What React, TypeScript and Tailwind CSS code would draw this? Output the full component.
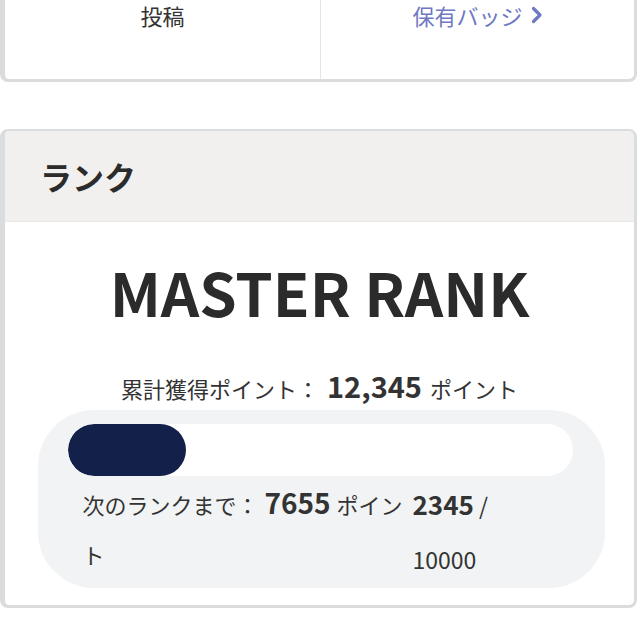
import React from 'react';

const font = { fontFamily: '"Noto Sans CJK JP", "Noto Sans", sans-serif' };

function StatsCard() {
  return (
    <div className="w-[637px] h-[82px] bg-white border-l-[5px] border-r-[3px] border-b-[3px] border-[#dadcde] rounded-b-[8px] flex items-start">
      <div className="w-[316px] h-full border-r border-[#e4e4e4] flex justify-center">
        <span className="text-[22px] leading-[30px] text-[#333333]">投稿</span>
      </div>
      <div className="flex-1 flex justify-center">
        <a className="text-[22px] leading-[30px] text-[#6f78c2] flex items-center gap-[8px]">
          保有バッジ
          <svg width="12" height="18" viewBox="0 0 12 18" fill="none">
            <path d="M2.5 2.5 L9 9 L2.5 15.5" stroke="#6f78c2" strokeWidth="3.2" strokeLinecap="round" strokeLinejoin="round" />
          </svg>
        </a>
      </div>
    </div>
  );
}

function RankCard() {
  const current = 2345;
  const goal = 10000;
  const pct = (current / goal) * 100;

  return (
    <div className="w-[637px] bg-white border-l-[5px] border-r-[3px] border-t-[2px] border-b-[3px] border-[#dadcde] rounded-[8px] overflow-hidden">
      <div className="h-[91px] bg-[#f1f0ef] border-b border-[#e8e8e8] flex items-center pl-[35px]">
        <h2 className="text-[32px] font-bold text-[#2b2b2b] leading-none">ランク</h2>
      </div>
      <div className="pt-[33px] pb-[17px] flex flex-col items-center">
        <p className="text-[60px] font-bold text-[#2b2b2b] leading-[72px]">MASTER RANK</p>
        <p className="mt-[40px] text-[22px] text-[#333333] leading-[36px] flex items-baseline">
          累計獲得ポイント：
          <span className="text-[29px] font-bold mx-[8px]">12,345</span>
          ポイント
        </p>
        <div className="mt-[4px] w-[567px] ml-[3px] bg-[#f2f3f4] rounded-[56px] pt-[14px] pb-[2px] pl-[30px] pr-[32px]">
          <div className="h-[52px] bg-white rounded-full overflow-hidden">
            <div className="h-full bg-[#13214a] rounded-full" style={{ width: `${pct}%` }} />
          </div>
          <div className="flex pl-[15px] mt-[1px] leading-[50px] text-[#333333]">
            <p className="w-[330px] text-[22px]">
              次のランクまで：
              <span className="text-[28px] font-bold mx-[6px]">7655</span>
              ポイント
            </p>
            <p className="text-[23px] leading-[54px] w-[80px]">
              <span className="text-[26px] font-bold">2345</span> / 10000
            </p>
          </div>
        </div>
      </div>
    </div>
  );
}

export default function App() {
  return (
    <div className="w-[640px] h-[640px] bg-white overflow-hidden" style={font}>
      <StatsCard />
      <div className="mt-[47px]">
        <RankCard />
      </div>
    </div>
  );
}
